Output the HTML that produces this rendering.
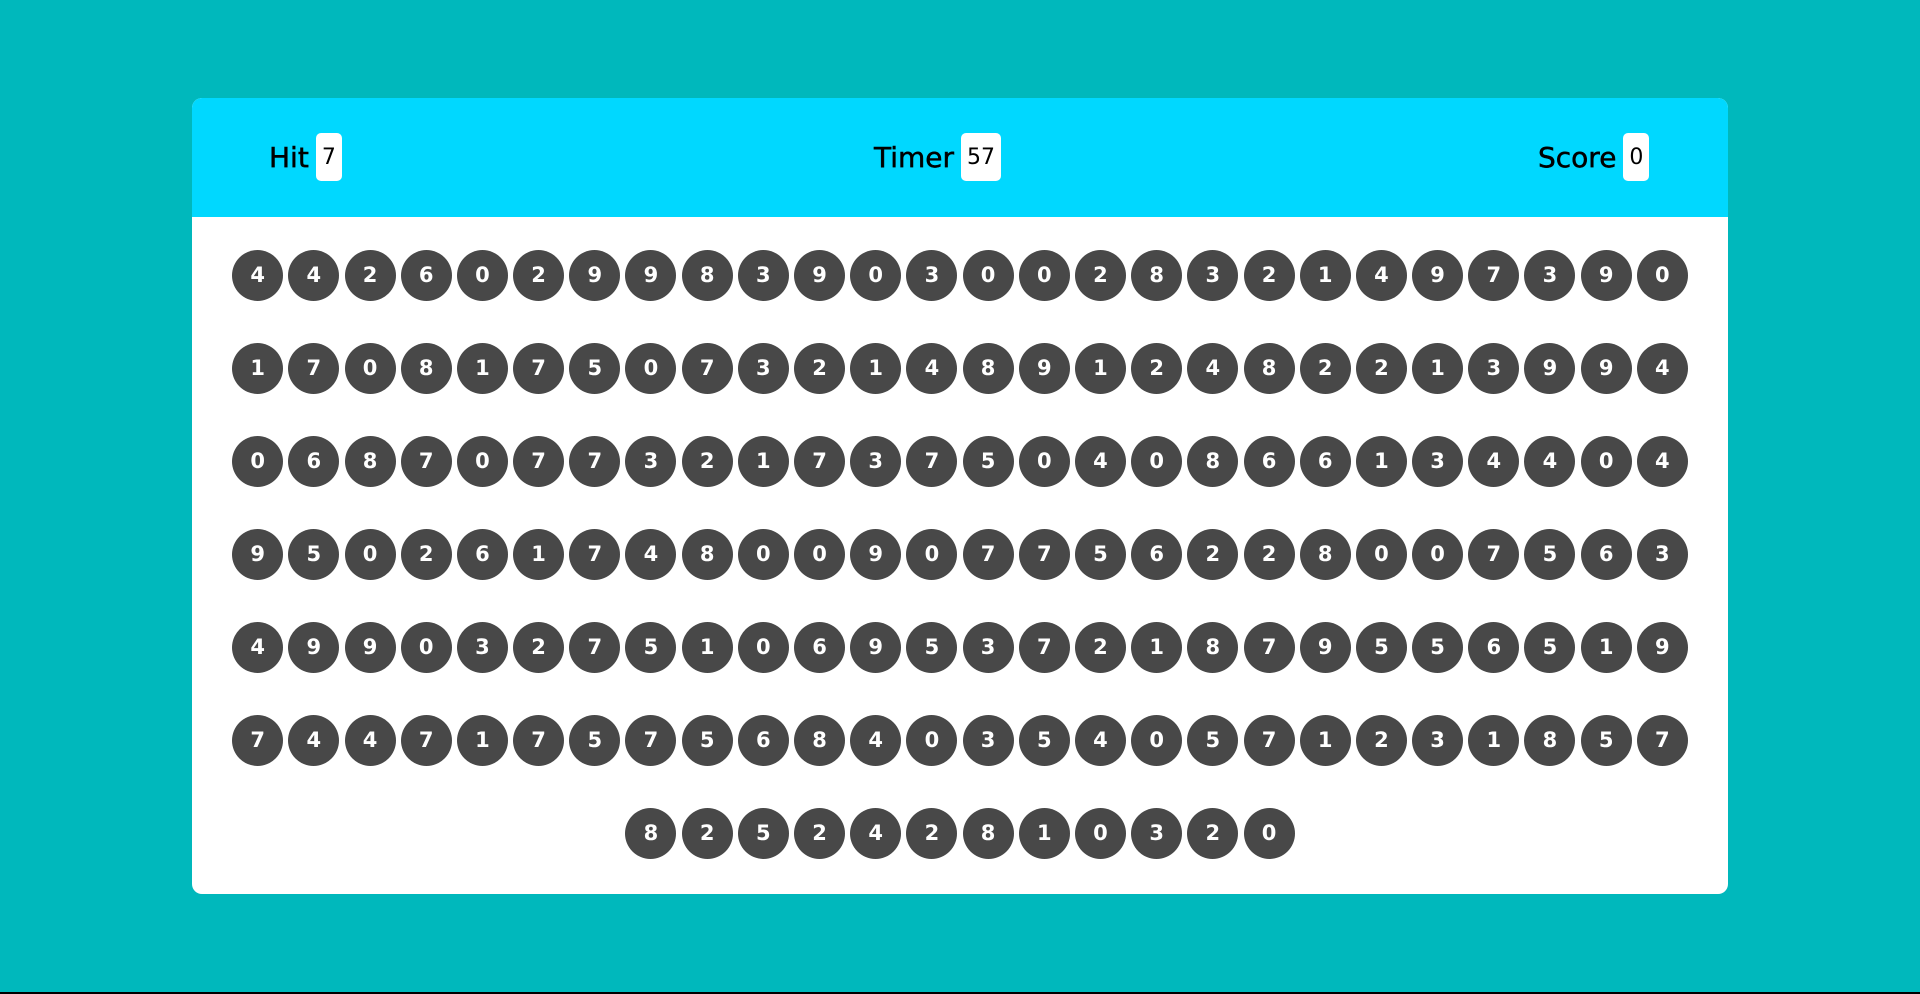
<!DOCTYPE html>
<html><head><meta charset="utf-8"><style>
html,body{margin:0;padding:0;}
body{width:1920px;height:994px;background:#00b8bc;position:relative;overflow:hidden;font-family:"DejaVu Sans","Liberation Sans",sans-serif;}
.bar{position:absolute;left:0;right:0;top:992px;height:2px;background:#000;}
.panel{position:absolute;left:192px;top:98px;width:1536px;height:796px;background:#fff;border-radius:10px;overflow:hidden;}
.head{position:absolute;left:0;top:0;width:100%;height:119px;background:#00d8ff;}
.it{position:absolute;top:35px;height:48px;display:flex;align-items:center;font-size:28px;color:#000;-webkit-text-stroke:0.5px #000;}
.it span{display:inline-block;background:#fff;border-radius:5px;height:48px;line-height:50px;padding:0 6px;margin-left:7px;font-size:22px;-webkit-text-stroke:0;}
.grid{position:absolute;left:37px;top:152px;width:1462px;display:flex;flex-wrap:wrap;justify-content:center;row-gap:42px;}
.b{width:51px;height:51px;margin:0 2.6px;border-radius:50%;background:#484848;color:#fff;font-weight:bold;font-size:21px;line-height:51px;text-align:center;}
</style></head><body>
<div class="panel">
<div class="head">
<div class="it" style="left:77px">Hit<span>7</span></div>
<div class="it" style="left:682px">Timer<span>57</span></div>
<div class="it" style="left:1346px">Score<span>0</span></div>
</div>
<div class="grid" id="g"></div>
</div>
<div class="bar"></div>
<script>
var s="44260299839030028321497390"+"17081750732148912482213994"+"06870773217375040866134404"+"95026174800907756228007563"+"49903275106953721879556519"+"74471757568403540571231857"+"825242810320";
var h="";for(var i=0;i<s.length;i++)h+='<div class="b">'+s[i]+'</div>';
document.getElementById("g").innerHTML=h;
</script>
</body></html>
